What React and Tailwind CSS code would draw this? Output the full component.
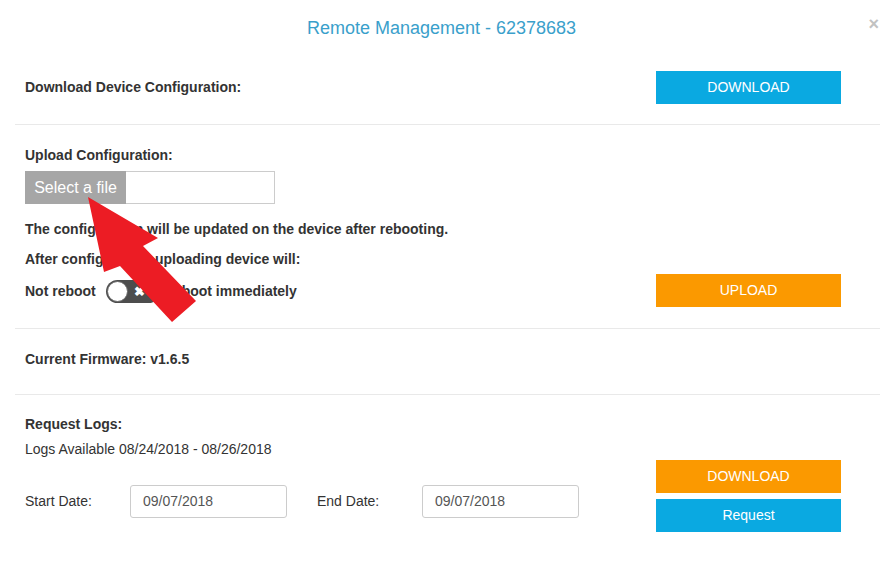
import React from "react";

const font = { fontFamily: '"Liberation Sans", Arial, sans-serif' };

const Divider = () => <div className="mx-[15px] h-px bg-[#e9e9e9]" />;

const Btn = ({ color, children }) => (
  <button
    className={`w-[185px] h-[33px] ${color} text-white text-[14px] flex items-center justify-center`}
  >
    {children}
  </button>
);

const Toggle = () => (
  <div className="relative w-[54px] h-[23px] rounded-full bg-[#4d4d4d] ml-[10px] mr-[4px]">
    <div className="absolute left-[1px] top-[1px] w-[21px] h-[21px] rounded-full bg-white border border-[#666]" />
    <span className="absolute left-[28px] top-[2px] text-white text-[13px] font-bold">✖</span>
  </div>
);

const DateInput = ({ value }) => (
  <div className="w-[157px] h-[33px] border border-[#ccc] rounded-[3px] flex items-center px-[12px] text-[14px] text-[#555]">
    {value}
  </div>
);

export default function App() {
  return (
    <div className="relative w-[895px] h-[573px] bg-white overflow-hidden text-[#333]" style={font}>
      {/* header */}
      <div className="relative h-[51px] flex items-center justify-center pt-[5px] pr-[12px]">
        <h1 className="text-[18px] text-[#3a9fcb]">Remote Management - 62378683</h1>
        <span className="absolute right-[16px] top-[11px] text-[18px] text-[#c2c2c2] font-bold">×</span>
      </div>

      {/* download config */}
      <div className="mx-[15px] px-[10px] pr-[39px] h-[73px] flex items-center justify-between">
        <span className="text-[14px] font-bold">Download Device Configuration:</span>
        <Btn color="bg-[#0aa9e1]">DOWNLOAD</Btn>
      </div>
      <Divider />

      {/* upload */}
      <div className="mx-[15px] px-[10px] pr-[39px] h-[203px] flex justify-between">
        <div className="pt-[20px] text-[14px] font-bold">
          <div className="leading-[20px]">Upload Configuration:</div>
          <div className="mt-[6px] flex w-[250px] h-[33px] border border-[#ccc]">
            <div className="w-[101px] -ml-px -mt-px h-[33px] bg-[#a6a6a6] text-white text-[16px] font-normal flex items-center justify-center">
              Select a file
            </div>
          </div>
          <div className="mt-[15px] leading-[20px]">
            The configuration will be updated on the device after rebooting.
          </div>
          <div className="mt-[10px] leading-[20px]">After configuration uploading device will:</div>
          <div className="mt-[11px] flex items-center h-[22px]">
            <span>Not reboot</span>
            <Toggle />
            <span>Reboot immediately</span>
          </div>
        </div>
        <div className="pt-[149px]">
          <Btn color="bg-[#fb9900]">UPLOAD</Btn>
        </div>
      </div>
      <Divider />

      {/* firmware */}
      <div className="mx-[15px] px-[10px] h-[65px] pt-[20px]">
        <div className="leading-[20px] text-[14px] font-bold">Current Firmware: v1.6.5</div>
      </div>
      <Divider />

      {/* logs */}
      <div className="mx-[15px] px-[10px] pr-[39px] flex justify-between">
        <div className="pt-[19px] text-[14px]">
          <div className="leading-[20px] font-bold">Request Logs:</div>
          <div className="mt-[5px] leading-[20px]">Logs Available 08/24/2018 - 08/26/2018</div>
          <div className="mt-[26px] flex items-center">
            <span className="w-[105px]">Start Date:</span>
            <DateInput value="09/07/2018" />
            <span className="ml-[30px] w-[105px]">End Date:</span>
            <DateInput value="09/07/2018" />
          </div>
        </div>
        <div className="pt-[65px] flex flex-col gap-[6px]">
          <Btn color="bg-[#fb9900]">DOWNLOAD</Btn>
          <Btn color="bg-[#0aa9e1]">Request</Btn>
        </div>
      </div>

      {/* annotation arrow */}
      <svg className="absolute left-0 top-0 pointer-events-none" width="895" height="573">
        <polygon
          points="88,197 158,238 143,246 196,301 172,322 120,266 104,272"
          fill="#ec1c24"
        />
      </svg>
    </div>
  );
}
